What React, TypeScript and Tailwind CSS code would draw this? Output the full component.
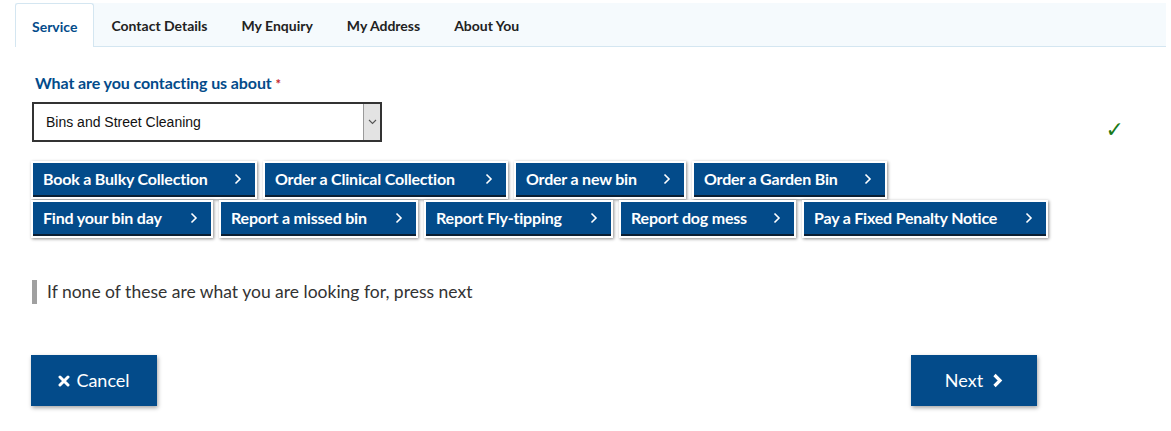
import React from "react";

const tabs = ["Service", "Contact Details", "My Enquiry", "My Address", "About You"];

const rowOne = [
  { label: "Book a Bulky Collection", w: "w-[226px]" },
  { label: "Order a Clinical Collection", w: "w-[245px]" },
  { label: "Order a new bin", w: "w-[172px]" },
  { label: "Order a Garden Bin", w: "w-[195px]" },
];

const rowTwo = [
  { label: "Find your bin day", w: "w-[182px]" },
  { label: "Report a missed bin", w: "w-[199px]" },
  { label: "Report Fly-tipping", w: "w-[189px]" },
  { label: "Report dog mess", w: "w-[177px]" },
  { label: "Pay a Fixed Penalty Notice", w: "w-[246px]" },
];

function Chevron() {
  return (
    <svg width="8" height="12" viewBox="0 0 8 12" fill="none" className="shrink-0">
      <path d="M1.5 1.5 L6 6 L1.5 10.5" stroke="white" strokeWidth="1.6" />
    </svg>
  );
}

function ServiceButton({ label, w }: { label: string; w: string }) {
  return (
    <div className={`${w} shrink-0 h-[38px] border-2 border-white shadow-[1px_1px_3px_rgba(0,0,0,0.45)]`}>
      <div className="h-full bg-[#034b8a] border-b-2 border-[#0b1f33] flex items-center justify-between pl-[10px] pr-[13px]">
        <span className="text-white font-bold text-[16px] tracking-[-0.2px]">{label}</span>
        <Chevron />
      </div>
    </div>
  );
}

export default function App() {
  return (
    <div className="w-[1171px] h-[431px] bg-white font-['Lato',sans-serif] pt-[3px]">
      {/* Tabs */}
      <div className="ml-[15px] mr-[5px] h-[44px] bg-[#f5fafd] border-b border-[#d4e6f1] flex items-end">
        {tabs.map((t, i) => (
          <div
            key={t}
            className={
              i === 0
                ? "h-[44px] -mb-px px-[16px] pt-[2px] flex items-center bg-white border border-b-0 border-[#d4e6f1] rounded-t-[3px] text-[#034b8a] font-bold text-[14px]"
                : "h-[43px] px-[17px] pt-[2px] flex items-center text-[#222] font-bold text-[14px]"
            }
          >
            {t}
          </div>
        ))}
      </div>

      {/* Service select */}
      <div className="pl-[32px] pr-[45px] pt-[26px] flex items-start">
        <div className="flex flex-col">
          <label className="pl-[3px] text-[16px] font-bold text-[#034b8a] leading-[20px] tracking-[-0.1px]">
            What are you contacting us about <span className="text-[#c4262e] text-[13px]">*</span>
          </label>
          <div className="mt-[8px] w-[350px] h-[40px] border-2 border-[#333] flex">
            <div className="flex-1 flex items-center pl-[12px] font-['Liberation_Sans',Arial,sans-serif] text-[14px] text-[#111]">
              Bins and Street Cleaning
            </div>
            <div className="w-[17px] bg-[#e3e3e3] border-l border-[#9a9a9a] flex items-center justify-center">
              <svg width="9" height="6" viewBox="0 0 9 6" fill="none">
                <path d="M1 1 L4.5 4.5 L8 1" stroke="#555" strokeWidth="1.1" />
              </svg>
            </div>
          </div>
        </div>
        <div className="flex-1 flex justify-end pt-[46px] pr-[2px]">
          <span className="text-[#1a7a1a] text-[22px] leading-none font-['DejaVu_Sans',sans-serif]">✓</span>
        </div>
      </div>

      {/* Buttons */}
      <div className="pl-[31px] mt-[19px] flex flex-col gap-[1px]">
        <div className="flex gap-[6px]">
          {rowOne.map((b) => (
            <ServiceButton key={b.label} {...b} />
          ))}
        </div>
        <div className="flex gap-[6px]">
          {rowTwo.map((b) => (
            <ServiceButton key={b.label} {...b} />
          ))}
        </div>
      </div>

      {/* Info */}
      <div className="ml-[32px] mt-[42px] border-l-[5px] border-[#a0a0a0] pl-[10px] h-[24px] flex items-center text-[17.5px] text-[#333]">
        If none of these are what you are looking for, press next
      </div>

      {/* Actions */}
      <div className="pl-[31px] pr-[134px] mt-[51px] flex justify-between">
        <button className="w-[126px] h-[51px] bg-[#034b8a] text-white text-[18px] flex items-center justify-center gap-[6px] shadow-[1px_2px_4px_rgba(0,0,0,0.35)]">
          <svg width="12" height="12" viewBox="0 0 12 12">
            <path d="M2 2 L10 10 M10 2 L2 10" stroke="white" strokeWidth="3" strokeLinecap="round" />
          </svg>
          Cancel
        </button>
        <button className="w-[126px] h-[51px] bg-[#034b8a] text-white text-[18px] flex items-center justify-center gap-[9px] shadow-[1px_2px_4px_rgba(0,0,0,0.35)]">
          Next
          <svg width="11" height="15" viewBox="0 0 11 15">
            <path d="M2.5 2 L8 7.5 L2.5 13" stroke="white" strokeWidth="3.2" fill="none" />
          </svg>
        </button>
      </div>
    </div>
  );
}
